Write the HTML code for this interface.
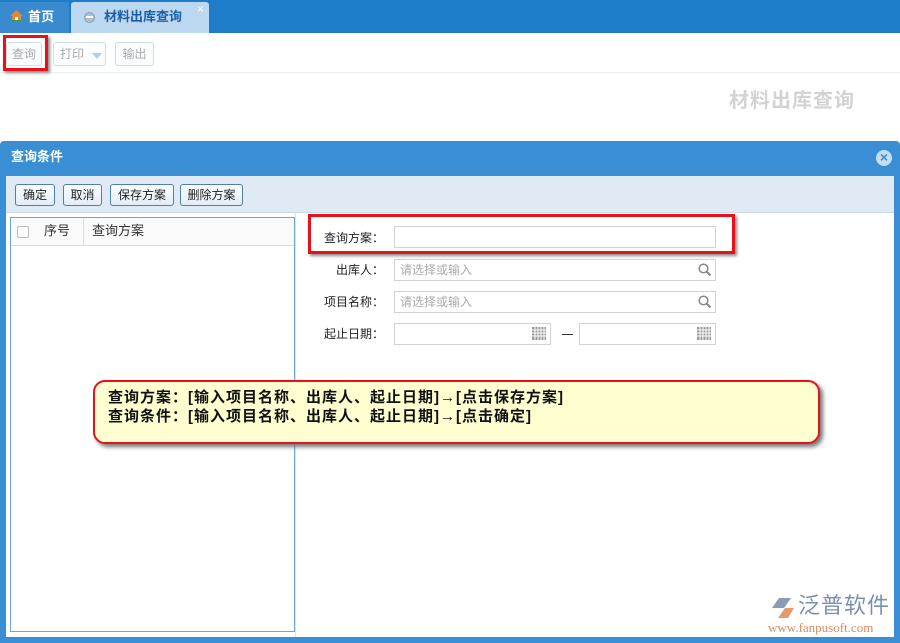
<!DOCTYPE html>
<html><head><meta charset="utf-8"><style>
*{margin:0;padding:0;box-sizing:border-box}
body{width:900px;height:643px;position:relative;overflow:hidden;background:#fff;font-family:"Liberation Sans","Noto Sans CJK SC",sans-serif;font-size:12px;color:#222}
.abs{position:absolute}
.tabbar{left:0;top:0;width:900px;height:33px;background:#1f7cc9}
.tab1{left:0;top:2px;width:69px;height:31px;background:#3a8ad0;color:#fff;font-weight:bold;font-size:13px;line-height:30px;padding-left:28px}
.tab2{left:71px;top:2px;width:138px;height:33px;background:#bcd8f0;border-radius:3px 3px 0 0;color:#1a5fa8;font-weight:bold;font-size:13px;line-height:30px;padding-left:33px}
.tb{left:0;top:33px;width:900px;height:40px;background:#fff;border-bottom:1px solid #e8eef4}
.btn{position:absolute;height:24px;border:1px solid #cfdde9;border-radius:3px;color:#aaa;font-size:12px;line-height:22px;text-align:center;background:#fafcfe}
.dlg{left:0;top:141px;width:900px;height:502px;background:#3a8fd4;border-radius:4px 4px 0 0}
.inner{left:6px;top:35px;width:888px;height:461px;background:#fff}
.dtb{left:0;top:0;width:888px;height:37px;background:#dfeaf5;border-bottom:1px solid #c9dbeb}
.dbtn{position:absolute;top:8px;height:22px;border:1px solid #4f7fae;border-radius:3px;background:linear-gradient(#fbfdff,#e3edf6);font-size:12px;line-height:20px;text-align:center;color:#222}
.lp{left:4px;top:41px;width:285px;height:415px;border:1px solid #6aa6dc}
.lab{position:absolute;width:84px;text-align:right;font-size:12px;line-height:14px}
.inp{position:absolute;height:22px;border:1px solid #d3d3d3;background:#fff;color:#aaa;font-size:12px;line-height:20px;padding-left:5px}
</style></head><body>
<div class="abs tabbar"></div>
<div class="abs tab1">首页</div>
<svg class="abs" style="left:9px;top:9px" width="15" height="14" viewBox="0 0 15 14"><path d="M7.5 1L1 7h2v6h9V7h2z" fill="#d98a3a"/><rect x="6" y="8" width="3" height="5" fill="#fff"/><rect x="3" y="11" width="9" height="2" fill="#4a9a3a"/></svg>
<div class="abs tab2">材料出库查询</div>
<div class="abs" style="left:84px;top:12px;width:11px;height:11px;border-radius:50%;background:#a9bfd6;border:1px solid #8aa4c0"></div>
<div class="abs" style="left:86px;top:16px;width:7px;height:2px;background:#fff"></div>
<div class="abs" style="left:197px;top:2px;color:#fff;font-size:12px">×</div>
<div class="abs tb"></div>
<div class="btn" style="left:6px;top:42px;width:36px">查询</div>
<div class="abs" style="left:3px;top:35px;width:45px;height:36px;border:3px solid #e8111a;box-shadow:2px 2px 3px #888"></div>
<div class="btn" style="left:53px;top:42px;width:53px;text-align:left;padding-left:6px">打印<span style="position:absolute;left:38px;top:10px;border:5px solid transparent;border-top:6px solid #a9d0ee;border-bottom:0"></span></div>
<div class="btn" style="left:115px;top:42px;width:39px">输出</div>
<div class="abs" style="left:729px;top:84px;font-size:20px;color:#d3d3d3;font-weight:bold;letter-spacing:1px">材料出库查询</div>

<div class="abs dlg">
<div class="abs" style="left:11px;top:8px;color:#fff;font-weight:bold;font-size:13px;line-height:16px">查询条件</div>
<div class="abs" style="left:876px;top:9px;width:16px;height:16px;border-radius:50%;background:#c6dcef;color:#3a8fd4;font-size:14px;line-height:15px;text-align:center;font-weight:bold">×</div>
<div class="abs inner">
<div class="abs dtb">
<div class="dbtn" style="left:9px;width:40px">确定</div>
<div class="dbtn" style="left:57px;width:39px">取消</div>
<div class="dbtn" style="left:104px;width:64px">保存方案</div>
<div class="dbtn" style="left:174px;width:63px">删除方案</div>
</div>
<div class="abs lp">
<div class="abs" style="left:0;top:0;width:283px;height:28px;border-bottom:1px solid #ddd;background:#fafafa"></div>
<div class="abs" style="left:6px;top:8px;width:12px;height:12px;border:1px solid #bbb;border-radius:2px;background:#fff"></div>
<div class="abs" style="left:33px;top:5px;font-size:13px;line-height:16px;color:#333">序号</div>
<div class="abs" style="left:72px;top:0;width:1px;height:28px;background:#ddd"></div>
<div class="abs" style="left:81px;top:5px;font-size:13px;line-height:16px;color:#333">查询方案</div>
</div>
<div class="abs" style="left:289px;top:37px;width:1px;height:424px;background:#d8e4ef"></div>
<div class="lab" style="left:294px;top:55px">查询方案：</div>
<div class="inp" style="left:388px;top:50px;width:322px"></div>
<div class="lab" style="left:294px;top:87px">出库人：</div>
<div class="inp" style="left:388px;top:83px;width:322px">请选择或输入</div>
<div class="lab" style="left:294px;top:119px">项目名称：</div>
<div class="inp" style="left:388px;top:115px;width:322px">请选择或输入</div>
<div class="lab" style="left:294px;top:151px">起止日期：</div>
<div class="inp" style="left:388px;top:147px;width:157px"></div>
<div class="abs" style="left:556px;top:158px;width:11px;height:1px;background:#333"></div>
<div class="inp" style="left:573px;top:147px;width:137px"></div>
<svg class="abs" style="left:692px;top:87px" width="14" height="14"><circle cx="5.5" cy="5.5" r="4.3" fill="none" stroke="#888" stroke-width="1.5"/><path d="M8.5 8.5l4 4" stroke="#888" stroke-width="2"/></svg>
<svg class="abs" style="left:692px;top:119px" width="14" height="14"><circle cx="5.5" cy="5.5" r="4.3" fill="none" stroke="#888" stroke-width="1.5"/><path d="M8.5 8.5l4 4" stroke="#888" stroke-width="2"/></svg>
<svg class="abs" style="left:526px;top:151px" width="14" height="13"><rect width="14" height="13" fill="#999"/><path d="M0 3h14M0 6h14M0 9h14M3 0v13M6 0v13M9 0v13M12 0v13" stroke="#fff" stroke-width="1"/></svg>
<svg class="abs" style="left:691px;top:151px" width="14" height="13"><rect width="14" height="13" fill="#999"/><path d="M0 3h14M0 6h14M0 9h14M3 0v13M6 0v13M9 0v13M12 0v13" stroke="#fff" stroke-width="1"/></svg>
<div class="abs" style="left:302px;top:38px;width:427px;height:40px;border:3px solid #e8111a;box-shadow:2px 2px 3px #888"></div>
<div class="abs" style="left:87px;top:204px;width:727px;height:64px;background:#fefed0;border:2px solid #e8111a;border-radius:12px;box-shadow:3px 3px 4px #777;padding:6px 0 0 13px;font-size:15px;font-weight:bold;line-height:19px;letter-spacing:1px;color:#111">查询方案：[输入项目名称、出库人、起止日期]→[点击保存方案]<br>查询条件：[输入项目名称、出库人、起止日期]→[点击确定]</div>
<div class="abs" style="left:764px;top:420px;width:30px;height:24px">
<svg width="30" height="24"><path d="M2 12L9 2h12L14 12h-6z" fill="#8a9bb8"/><path d="M8 22L15 12h9l-6 10z" fill="#e59a6a"/></svg></div>
<div class="abs" style="left:792px;top:417px;font-size:22px;line-height:26px;color:#7d8fae;letter-spacing:1px">泛普软件</div>
<div class="abs" style="left:762px;top:444px;font-family:'Liberation Serif',serif;font-size:13px;color:#d88a60">www.fanpusoft.com</div>
</div>
</div>
</body></html>
